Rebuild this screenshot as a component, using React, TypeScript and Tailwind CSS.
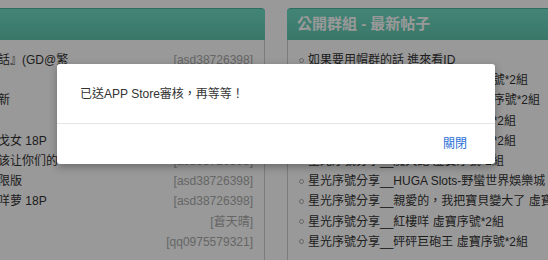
import React from "react";

const font = { fontFamily: '"Liberation Sans", "Noto Sans CJK TC", sans-serif' };

const leftRows: { t: string; u: string; bold?: boolean }[] = [
  { t: "話』(GD@繁", u: "[asd38726398]" },
  { t: "", u: "[asd38726398]" },
  { t: "新", u: "[asd38726398]" },
  { t: "", u: "[asd38726398]" },
  { t: "戈女 18P", u: "[asd38726398]" },
  { t: "该让你们的", u: "[asd38726398]" },
  { t: "限版", u: "[asd38726398]" },
  { t: "咩萝 18P", u: "[asd38726398]" },
  { t: "", u: "[蒼天晴]" },
  { t: "", u: "[qq0975579321]" },
];

const rightRows = [
  "如果要用帽群的話 進來看ID",
  "星光序號分享__魔法大冒險 虛寶序號*2組",
  "星光序號分享__三國英雄傳說 虛寶序號*2組",
  "星光序號分享__神魔之塔 虛寶序號*2組",
  "星光序號分享__天天過關 虛寶序號*2組",
  "星光序號分享__魔天記 虛寶序號*2組",
  "星光序號分享__HUGA Slots-野蠻世界娛樂城",
  "星光序號分享__親愛的，我把寶貝變大了 虛寶序號*2組",
  "星光序號分享__紅樓咩 虛寶序號*2組",
  "星光序號分享__砰砰巨砲王 虛寶序號*2組",
];

export default function App() {
  return (
    <div className="relative w-[548px] h-[260px] overflow-hidden bg-white" style={font}>
      <div className="flex pt-[8px] h-full">
        {/* Left panel */}
        <div className="w-[265px] shrink-0 flex flex-col">
          <div className="h-[32px] rounded-tr-[4px] border-t border-[#4eb6a0] bg-gradient-to-b from-[#6edec6] to-[#61c6af]" />
          <div className="flex-1 border-r border-[#cfcfcf] pt-[10px]">
            {leftRows.map((r, i) => (
              <div key={i} className="h-[20.2px] flex items-center justify-between pr-[11px] text-[12px] whitespace-nowrap">
                <span className="text-[#333] -ml-[2px]">{r.t}</span>
                <span className="text-[#aaa]">{r.u}</span>
              </div>
            ))}
          </div>
        </div>
        {/* Right panel */}
        <div className="ml-[22px] w-[300px] shrink-0 flex flex-col">
          <div className="h-[32px] rounded-tl-[4px] border-t border-[#4eb6a0] bg-gradient-to-b from-[#6edec6] to-[#61c6af] flex items-center pl-[10px]">
            <span className="text-white font-bold text-[15px]">公開群組 - 最新帖子</span>
          </div>
          <div className="flex-1 border-l border-[#cfcfcf] pt-[10px] overflow-hidden">
            {rightRows.map((r, i) => (
              <div key={i} className="h-[20.2px] flex items-center pl-[11px] text-[12px] whitespace-nowrap">
                <span className="w-[5px] h-[5px] rounded-full border border-[#aaa] shrink-0" />
                <span className="ml-[4px] text-[#333]">{r}</span>
              </div>
            ))}
          </div>
        </div>
      </div>

      {/* Backdrop */}
      <div className="absolute inset-0 bg-black/40" />

      {/* Modal */}
      <div className="absolute left-[57px] top-[64px] w-[438px] h-[100px] bg-white rounded-[3px] shadow-[0_3px_9px_rgba(0,0,0,0.3)] flex flex-col">
        <div className="h-[60px] flex items-center px-[23px] border-b border-[#e5e5e5] text-[12px] text-[#333]">
          已送APP Store審核，再等等！
        </div>
        <div className="flex-1 flex items-center justify-end pr-[28px] text-[12px] text-[#2a6fd6]">
          關閉
        </div>
      </div>
    </div>
  );
}
